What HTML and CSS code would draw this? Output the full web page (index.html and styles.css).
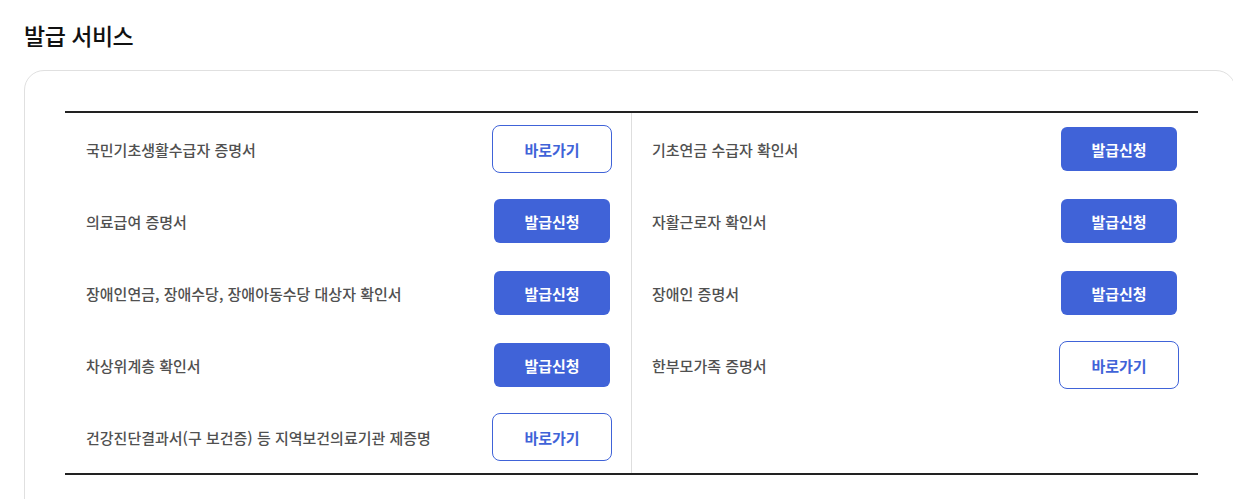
FILE: index.html
```html
<!DOCTYPE html>
<html lang="ko">
<head>
  <meta charset="UTF-8">
  <meta name="viewport" content="width=device-width, initial-scale=1.0">
  <title>발급 서비스</title>
  <link rel="stylesheet" href="styles.css">
</head>
<body>
  <h2 class="page-title">발급 서비스</h2>

  <div class="service-box">
    <div class="service-table">
      <div class="service-col">
        <div class="service-row">
          <span class="service-name">국민기초생활수급자 증명서</span>
          <button class="btn btn-link">바로가기</button>
        </div>
        <div class="service-row">
          <span class="service-name">의료급여 증명서</span>
          <button class="btn btn-apply">발급신청</button>
        </div>
        <div class="service-row">
          <span class="service-name">장애인연금, 장애수당, 장애아동수당 대상자 확인서</span>
          <button class="btn btn-apply">발급신청</button>
        </div>
        <div class="service-row">
          <span class="service-name">차상위계층 확인서</span>
          <button class="btn btn-apply">발급신청</button>
        </div>
        <div class="service-row">
          <span class="service-name">건강진단결과서(구 보건증) 등 지역보건의료기관 제증명</span>
          <button class="btn btn-link">바로가기</button>
        </div>
      </div>
      <div class="service-col">
        <div class="service-row">
          <span class="service-name">기초연금 수급자 확인서</span>
          <button class="btn btn-apply">발급신청</button>
        </div>
        <div class="service-row">
          <span class="service-name">자활근로자 확인서</span>
          <button class="btn btn-apply">발급신청</button>
        </div>
        <div class="service-row">
          <span class="service-name">장애인 증명서</span>
          <button class="btn btn-apply">발급신청</button>
        </div>
        <div class="service-row">
          <span class="service-name">한부모가족 증명서</span>
          <button class="btn btn-link">바로가기</button>
        </div>
      </div>
    </div>
  </div>
</body>
</html>
```

FILE: styles.css
```css
* {
  box-sizing: border-box;
}

html, body {
  overflow: hidden;
}

body {
  background-color: #fff;
  font-family: "Noto Sans CJK KR", "Noto Sans", sans-serif;
  margin: 0;
  padding: 0 0 0 24px;
  color: #222;
}

.page-title {
  font-size: 23px;
  font-weight: 500;
  letter-spacing: -0.5px;
  line-height: 32px;
  margin: 19px 0 19px;
  color: #111;
}

.service-box {
  width: 1212px;
  border: 1px solid #e0e0e0;
  border-radius: 20px;
  padding: 40px 40px 60px;
}

.service-table {
  display: flex;
  border-top: 2px solid #222;
  border-bottom: 2px solid #222;
  width: 1133px;
}

.service-col {
  flex: 1;
}

.service-col + .service-col {
  border-left: 1px solid #dedede;
}

.service-row {
  height: 72px;
  display: flex;
  align-items: center;
  justify-content: space-between;
  padding: 0 21px 0 21px;
}

.service-col + .service-col .service-row {
  padding-left: 20px;
}

.service-name {
  font-size: 15px;
  font-weight: 500;
  color: #505050;
}

.btn {
  font-family: inherit;
  font-size: 15px;
  font-weight: 700;
  width: 116px;
  height: 44px;
  border-radius: 6px;
  cursor: pointer;
}

.btn-apply {
  background-color: #4063d8;
  color: #fff;
  border: none;
}

.btn-link {
  background-color: #fff;
  color: #4063d8;
  border: 1px solid #4063d8;
  width: 120px;
  height: 48px;
  margin-right: -2px;
  border-radius: 8px;
}
```
